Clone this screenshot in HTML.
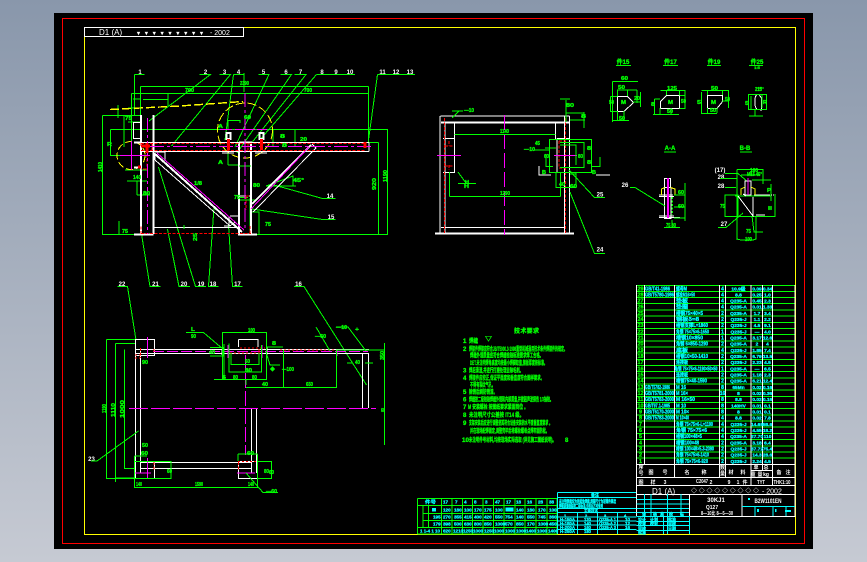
<!DOCTYPE html>
<html><head><meta charset="utf-8"><style>
html,body{margin:0;padding:0;width:867px;height:562px;overflow:hidden;background:linear-gradient(to bottom,#8997ab,#c6cad3)}
svg{position:absolute;left:0;top:0;display:block}
path,line,rect,polygon,polyline,circle,ellipse{shape-rendering:crispEdges;fill:none}
text{font-family:"Liberation Sans","Noto Sans CJK SC",sans-serif;font-weight:bold}
.w{stroke:#fff;stroke-width:1}.W{stroke:#fff;stroke-width:2}
.g{stroke:#0f0;stroke-width:1}
.r{stroke:#f00;stroke-width:1.3;stroke-dasharray:3 1.5}
.p{stroke:#f0f;stroke-width:1.2;stroke-dasharray:14 3 3 3}
.ps{stroke:#f0f;stroke-width:1}
.y{stroke:#ff0;stroke-width:1}.yd{stroke:#ff0;stroke-width:1.4;stroke-dasharray:9 3}
.c{stroke:#0ff;stroke-width:1}
.tw{fill:#fff;font-size:7px}
.tg{fill:#0f0;stroke:#0f0;stroke-width:.3;font-size:5px}
.tc{fill:#0ff;stroke:#0ff;stroke-width:.3;font-size:5px}
.tn{fill:#0f0;stroke:#0f0;stroke-width:.3;font-size:5.5px}
</style></head><body>
<svg width="867" height="562" viewBox="0 0 867 562" xmlns="http://www.w3.org/2000/svg">
<rect x="54" y="13" width="759" height="536" style="fill:#000"/>
<rect x="62.5" y="18.5" width="742" height="525" style="stroke:#f00;stroke-width:1"/>
<rect x="84.5" y="27.5" width="711" height="507" style="stroke:#ff0;stroke-width:1.3"/>
<rect x="84.5" y="27.5" width="159" height="9" class="w"/>
<text x="99" y="35" class="tw" style="font-size:8px;font-weight:normal">D1 (A)</text>
<text x="137" y="35" class="tw" textLength="66" lengthAdjust="spacing" style="font-size:6px">▾▾▾▾▾▾▾▾▾</text>
<text x="210" y="35" class="tw" style="font-size:7px;font-weight:normal">- 2002</text>

<!-- front view green dims -->
<path class="g" d="M140.5 86.5H368.5M131.5 93.5H368.5M140.5 86.5V115M368.5 86.5V142M131.5 93.5V150M102.5 115.5H141M102.5 115.5V234.5H141M110.5 129.5H387.5V234.5H251M110.5 129.5V155.5H141M378.5 142.5V234.5M368 142.5H378.5M143 99.5H168M168 94V106M133 99H140"/>
<path class="g" d="M118 105V118M128 108H140M128 122H140M125 170H147M127 181H147M137 195V181M150 195H137"/>
<path class="g" d="M228 120.5H240V123M228 120.5V130M228 165V145M228 165H240M244 73V92M295 130V146M273 130V146M256 200H240M250 198V234M259 234.5V212H252M296 186H266V186L293 176V186"/>
<!-- leaders -->
<path class="g" d="M134.5 74.5H144.5M134.5 74.5V115M199.5 74.5H210.5L149 121M219.5 74.5H230.5L171.5 146M233.5 74.5H244M233.5 74.5L225 140M258.5 74.5H269L235 147M280.5 74.5H291.5L237 153M294.5 74.5H306L250 145M316.5 74.5H355M316.5 74.5L261.5 138M377.5 74.5H415M377.5 74.5L368.5 140"/>
<path class="g" d="M274 185L322.5 198.5H335.5M252 209L322.5 219.5H335.5M141.5 234L150 286.5H160.5M167.5 229L179 286.5H190M158.5 167L195.5 286.5H206M214 207L208.5 286.5H218.5M228.5 225L232.5 286.5H242.5"/>
<path class="g" d="M117.5 286.5H127.5L136 340M294 286.5H304L366.5 385"/>
<path class="g" d="M124 147V116M119 234V221"/>
<path class="yd" d="M110 109.5L180 106L243 101.5"/>
<circle class="y" style="stroke-dasharray:9 3" cx="245" cy="130.5" r="27.5"/>
<ellipse class="y" style="stroke-dasharray:7 3" cx="131" cy="155.5" rx="14" ry="14"/>
<!-- front structure -->
<path class="W" d="M141 115V234M153.5 115V234M239 142V234M251 142V234"/>
<path class="W" d="M134 234.5H153.5M238 234.5H257"/>
<path class="w" d="M141 142.5H369M141 151.5H369M369 142.5V151.5M153 227.5H239"/>
<path class="W" d="M239 142.5H252"/>
<path class="W" d="M155 154L242 232M252 204L311 145"/>
<path class="w" d="M155 160L230 226L235 222M253 212L316 148L312 144M155 153V160"/>
<rect class="w" x="133.5" y="122.5" width="7" height="16"/>
<path class="W" d="M134 142.5H141M134 167.5H141"/>
<rect class="W" x="226.5" y="133" width="4" height="6"/>
<rect class="W" x="259.5" y="133" width="4" height="6"/>
<path class="w" d="M223 151.5H233M256 151.5H266M222 153H234M255 153H267M155 152H165V161"/>
<path class="w" d="M224 226H229V217M240 216H230M240 196H251"/>
<path class="g" d="M239 166H251M239 197.5H248M184 225V229"/>
<path class="r" d="M141 143.5H366M141 150.5H366M141 233.5H251M141 226.5V234M250 226V234"/>
<path class="r" d="M141 143V146M147 150V170M146 169H141M152 143V152M248 143V152M246 196V210M246 196H250"/>
<path class="p" d="M150 146.5H373"/>
<path class="p" d="M147.5 118V234M245 93V231"/>
<path class="ps" d="M120 155.5H150M131.5 141V170"/>
<path class="ps" d="M220 129.5H232M235 129.5H255M257 129.5H267" />
<path class="ps" d="M157 153L244 230M251 209L309 147"/>
<path stroke="#f00" stroke-width="3" d="M147 143V153M141 146H150M228.5 139V150M261.5 139V150M365 142V148M138 167H141"/>

<!-- labels -->
<g class="tw" style="font-size:6px" text-anchor="middle">
<text x="140" y="74">1</text><text x="205.5" y="74">2</text><text x="224.5" y="74">3</text><text x="238.5" y="74">4</text><text x="263.5" y="74">5</text><text x="286" y="74">6</text><text x="300.5" y="74">7</text><text x="322" y="74">8</text><text x="336" y="74">9</text><text x="350" y="74">10</text><text x="382.5" y="74">11</text><text x="396" y="74">12</text><text x="410" y="74">13</text>
<text x="330" y="198">14</text><text x="331" y="219">15</text>
<text x="122" y="286">22</text><text x="155.5" y="286">21</text><text x="184" y="286">20</text><text x="201" y="286">19</text><text x="213" y="286">18</text><text x="237.5" y="286">17</text><text x="298.5" y="286">16</text>
<text x="91.5" y="461">23</text><text x="600" y="196.5">25</text><text x="600" y="251.5">24</text><text x="625" y="187">26</text><text x="724" y="226">27</text><text x="721" y="179">28</text><text x="721" y="188">28</text><text x="720" y="172">(17)</text>
</g>
<!-- small dims front -->
<g class="tg">
<text x="185" y="92" textLength="9" lengthAdjust="spacingAndGlyphs">700</text><text x="240" y="85" textLength="9" lengthAdjust="spacingAndGlyphs">2390</text><text x="304" y="92" textLength="8" lengthAdjust="spacingAndGlyphs">700</text>
<text x="125" y="120" textLength="7" lengthAdjust="spacingAndGlyphs">75</text><text x="107" y="146" textLength="5" lengthAdjust="spacingAndGlyphs">R</text><text x="133" y="179" textLength="8" lengthAdjust="spacingAndGlyphs">140</text><text x="143" y="195" textLength="7" lengthAdjust="spacingAndGlyphs">80</text><text x="122" y="233" textLength="6" lengthAdjust="spacingAndGlyphs">75</text>
<text x="244" y="119" textLength="7" lengthAdjust="spacingAndGlyphs">60</text><text x="218" y="128" textLength="5" lengthAdjust="spacingAndGlyphs">A</text><text x="218" y="164" textLength="5" lengthAdjust="spacingAndGlyphs">A</text>
<text x="280" y="138" textLength="5" lengthAdjust="spacingAndGlyphs">8</text><text x="282" y="147" textLength="5" lengthAdjust="spacingAndGlyphs">8</text><text x="300" y="141" textLength="7" lengthAdjust="spacingAndGlyphs">20</text><text x="253" y="187" textLength="7" lengthAdjust="spacingAndGlyphs">80</text><text x="234" y="199" textLength="6" lengthAdjust="spacingAndGlyphs">75</text><text x="265" y="226" textLength="6" lengthAdjust="spacingAndGlyphs">75</text><text x="293" y="182" textLength="11" lengthAdjust="spacingAndGlyphs">45°</text><text x="194" y="185" textLength="8" lengthAdjust="spacingAndGlyphs">1/8</text>
<text transform="translate(102 172) rotate(-90)" textLength="10" lengthAdjust="spacingAndGlyphs">1410</text>
<text transform="translate(376 190) rotate(-90)" textLength="12" lengthAdjust="spacingAndGlyphs">920</text>
<text transform="translate(387 182) rotate(-90)" textLength="12" lengthAdjust="spacingAndGlyphs">1190</text>
<text transform="translate(197 241) rotate(-90)" textLength="8" lengthAdjust="spacingAndGlyphs">25</text>
</g>

<!-- side view -->
<path class="w" d="M440.5 116H569.5M440 116V233M445 122V233M564.5 116V233M569.5 116V233M441 227.5H565"/>
<path class="W" d="M441 122.5H570M435 233.5H574"/>
<path class="w" d="M454.5 123V139M555.5 123V139M443 138.5H454.5V172.5H443M557 138.5H570M557 138.5V172.5H570M443 172.5H454"/>
<path class="r" d="M444.5 118V233M565.5 118V233M449 141V146M449 165V170M559 141V168M445 146H453M445 166H453M559 141H565M559 168H565"/>
<path class="p" style="stroke-dasharray:15 4" d="M504.5 115V235"/>
<path class="ps" d="M437 155.5H461M554 155.5H577"/>
<path class="g" d="M454.5 134.5H555.5M449.5 196.5H560.5M449.5 172V196.5M560.5 172V196.5M549.5 139.5H591.5V172.5H549.5ZM560 142.5H584V167.5H560M560 145H576V165M546 154V166.5H553M592 166.5H600V157M569 170L594.5 197.5H605M570 192L594.5 253.5H605M556 172V187.5H576V172M576 174H570M466 183L458 172M458 183.5H476M566 100V122M560 99H570M566 113H584V128M584 112V128M570 120H585M545 148H556M534 150H549"/>
<path class="g" d="M459 111L452 118M452 111H463"/>
<path class="w" d="M539 166V175H551M596 175H610"/>
<g class="tg">
<text x="500" y="133" textLength="9" lengthAdjust="spacingAndGlyphs">1140</text><text x="500" y="195" textLength="10" lengthAdjust="spacingAndGlyphs">1290</text><text x="464" y="112" textLength="10" lengthAdjust="spacingAndGlyphs">—10</text><text x="566" y="107" textLength="8" lengthAdjust="spacingAndGlyphs">80</text>
<text x="524" y="151" textLength="11" lengthAdjust="spacingAndGlyphs">—10</text><text x="535" y="145" textLength="5" lengthAdjust="spacingAndGlyphs">45</text><text x="544" y="158" textLength="5" lengthAdjust="spacingAndGlyphs">60</text><text x="578" y="158" textLength="5" lengthAdjust="spacingAndGlyphs">80</text><text x="587" y="150" textLength="4" lengthAdjust="spacingAndGlyphs">8</text><text x="587" y="164" textLength="4" lengthAdjust="spacingAndGlyphs">8</text><text x="559" y="186" textLength="6" lengthAdjust="spacingAndGlyphs">40</text><text x="570" y="188" textLength="7" lengthAdjust="spacingAndGlyphs">60</text><text x="581" y="118" textLength="5" lengthAdjust="spacingAndGlyphs">8</text><text x="465" y="184" textLength="4" lengthAdjust="spacingAndGlyphs">H</text><text x="464" y="188" textLength="5" lengthAdjust="spacingAndGlyphs">H</text><text x="542" y="174" textLength="4" lengthAdjust="spacingAndGlyphs">B</text><text x="592" y="174" textLength="4" lengthAdjust="spacingAndGlyphs">B</text>
</g>

<!-- sections -->
<g class="tn" text-anchor="middle" style="font-size:6px"><text x="623" y="64">件15</text><text x="670.5" y="64">件17</text><text x="714" y="64">件19</text><text x="757" y="64">件25</text><text x="757" y="69" style="font-size:4px">1:5</text><text x="670" y="150">A-A</text><text x="745" y="150">B-B</text></g>
<path class="g" d="M616 65.5H631M663 65.5H678M707 65.5H721M749 65.5H763M664 152H676M740 152H752"/>
<polygon class="w" points="617.5,96.5 627.5,96.5 633.5,102.5 624,111.5 617.5,111.5"/>
<path class="g" d="M612.5 81.5H638M612.5 81.5V122M617 90H637M637 90V103M617.5 90V96M627.5 90V96M640.5 92V107M633 102H641M610.5 96.5H617.5M610.5 96.5V111.5H617.5M612 120.5H629M617.5 111V120M624 111V120"/>
<polygon class="w" points="666.5,95.5 679.5,95.5 679.5,108.5 660.5,108.5 660.5,101.5"/>
<path class="g" d="M660.5 90.5H685M666.5 90V95M679.5 90V95M679.5 95.5H685V108.5H679.5M654.5 99H660M654.5 99V114M653 114.5H679M660 108V114M671 108V114M685 90V108"/>
<polygon class="w" points="707.5,95.5 722.5,95.5 722.5,101.5 717,108.5 707.5,108.5"/>
<path class="g" d="M701.5 90.5H729M707.5 90V95M722.5 90V95M728.5 90V108M722 101H729M701.5 92V114M701 113.5H717M707.5 108V113M717 108V113"/>
<path class="w" d="M753.5 94.5H759L761.5 98V110L759 109.5H753.5M757 94.5C754 97 754 106 757 109.5"/>
<path class="g" d="M748.5 94.5H766.5V109.5H748.5ZM751 96V110M762 94.5V108M749 116H763M755 110V116M757 88H764"/>
<!-- section 26 -->
<rect class="w" x="664.5" y="178.5" width="6" height="9"/>
<path class="w" d="M664.5 187V218.5H671V187M665 217.5H671"/>
<path class="w" d="M659 195H673M659 196.5H674M659 216H674M659 217.5H680"/>
<path class="y" d="M661.5 195V189L665 187.5M670.5 187.5L675 189V195"/>
<path class="ps" style="stroke-width:2" d="M668 178V218"/>
<path class="g" d="M630 187.5H635L665 206M685 183V221M674 195H685M674 207H685M674 218H685M664 227.5H680M672 220V227"/>
<path class="g" style="stroke-dasharray:2 1.5;stroke-width:1.5" d="M672 197V215"/>
<!-- section 27 -->
<path class="g" d="M737 169.5H763V184M737 169.5V240M751 171V175M741 175H760M752 180H771M771 184V201M735 196H771M725 195H738V216.5H725ZM725 216.5H775V194M737 216V239L741 240H753L756 239V216M725 178.5H736M720 178.5H737M725 187.5H736M725 173.5H738L748 182M752 216L754 232H763M718 227.5H726L743 213"/>
<path class="w" d="M745 181H751V195H745ZM743 194L746 196M738 196L753 216V197M754 195H769M756 215H765"/>
<path class="y" d="M741 195V189L745 187M751 187L755 189V195"/>
<path class="ps" style="stroke-width:1.3" d="M748 178V195"/>
<path class="w" style="stroke-dasharray:1 1" d="M757 195H775"/>
<g class="tg"><text x="750" y="172" textLength="8" lengthAdjust="spacingAndGlyphs">160</text><text x="747" y="176" textLength="15" lengthAdjust="spacingAndGlyphs">M16 45°</text><text x="767" y="192" textLength="4" lengthAdjust="spacingAndGlyphs">P</text><text x="768" y="210" textLength="4" lengthAdjust="spacingAndGlyphs">80</text><text x="720" y="208" textLength="5" lengthAdjust="spacingAndGlyphs">75</text><text x="746" y="233" textLength="5" lengthAdjust="spacingAndGlyphs">75</text><text x="745" y="241" textLength="7" lengthAdjust="spacingAndGlyphs">100</text><text x="666" y="227" textLength="10" lengthAdjust="spacingAndGlyphs">75 80</text><text x="678" y="194" textLength="6" lengthAdjust="spacingAndGlyphs">60</text><text x="678" y="208" textLength="6" lengthAdjust="spacingAndGlyphs">60</text><text x="609" y="104" textLength="5" lengthAdjust="spacingAndGlyphs">50</text><text x="621" y="104" textLength="5" lengthAdjust="spacingAndGlyphs">M</text><text x="618" y="89" textLength="7" lengthAdjust="spacingAndGlyphs">50</text><text x="621" y="80" textLength="7" lengthAdjust="spacingAndGlyphs">60</text><text x="634" y="100" textLength="6" lengthAdjust="spacingAndGlyphs">20</text><text x="619" y="120" textLength="6" lengthAdjust="spacingAndGlyphs">50</text><text x="667" y="90" textLength="10" lengthAdjust="spacingAndGlyphs">125</text><text x="668" y="104" textLength="5" lengthAdjust="spacingAndGlyphs">M</text><text x="681" y="103" textLength="5" lengthAdjust="spacingAndGlyphs">50</text><text x="667" y="113" textLength="6" lengthAdjust="spacingAndGlyphs">50</text><text x="651" y="106" textLength="4" lengthAdjust="spacingAndGlyphs">8</text><text x="711" y="90" textLength="7" lengthAdjust="spacingAndGlyphs">50</text><text x="711" y="104" textLength="5" lengthAdjust="spacingAndGlyphs">M</text><text x="725" y="101" textLength="5" lengthAdjust="spacingAndGlyphs">50</text><text x="697" y="104" textLength="4" lengthAdjust="spacingAndGlyphs">5</text><text x="710" y="112" textLength="6" lengthAdjust="spacingAndGlyphs">50</text><text x="755" y="91" textLength="7" lengthAdjust="spacingAndGlyphs">215</text><text x="745" y="105" textLength="4" lengthAdjust="spacingAndGlyphs">5</text><text x="763" y="104" textLength="4" lengthAdjust="spacingAndGlyphs">R</text></g>

<!-- plan view -->
<path class="w" d="M135.5 344V473M140.5 350V473M135 349.5H369M135 353.5H369M362.5 353V408M368.5 353V408M251.5 408V473M256.5 408V473M141 462.5H252M141 468.5H252"/>
<rect class="w" x="135.5" y="339.5" width="19" height="16"/>
<rect class="w" x="135.5" y="461.5" width="19" height="17"/>
<rect class="w" x="238.5" y="461.5" width="19" height="17"/>
<path class="w" d="M238.5 339.5H258V347M238.5 339.5V347M222 349V355M267 347V355"/>
<path class="p" style="stroke-dasharray:19 3" d="M129 408.5H376"/>
<path class="p" style="stroke-dasharray:15 3" d="M245.5 355V455"/>
<path class="ps" style="stroke-dasharray:11 3" d="M153 351.5H368"/>
<path class="ps" d="M147.5 337V358M147.5 458V479M135 473H151M237 473H255M228 345V358M262 345V358M337 350V356"/>
<path class="r" style="stroke-dasharray:2 2" d="M280 350H366M135 461.5H153M238 461.5H257M240 348H265M230 353H260M135 355H141M135 358H140"/>
<path class="r" d="M140.5 348V358M154 349V353M154 462V470M238.5 462V470M259 349V353M229 349V354"/>
<path class="g" d="M106.5 339.5H135M106.5 339.5V478.5H135M115.5 343.5H135M115.5 343.5V482M115 478H135M124.5 349.5V468.5H135M222.5 332.5H266.5V379.5H222.5ZM229 343.5V372H261.5V345M231 353V364.5H259V353M214 379.5H266M224 344V378M246 387.5H336.5V350M283.5 350V387M210 347.5H223V356H210M266 347H283M246 385V380M336 350H384M384.5 343V445M137 365H137"/>
<path class="g" d="M186 332.5H203.5L223.5 349.5M97 461H91M97 461L138.5 431M134.5 456H147M134.5 456V487.5H257.5V454M134.5 461.5H171V478.5H134.5M238 454H257.5M257.5 461.5H271.5V478.5H257.5M238 461V454M246 473L263 492.5H278M316 327L330 351M336 327H348L366 351M280 365H270L266 352M365 363H373M347 363H353"/>
<g class="tg">
<text x="248" y="332" textLength="7" lengthAdjust="spacingAndGlyphs">100</text><text x="272" y="345" textLength="4" lengthAdjust="spacingAndGlyphs">8</text><text x="270" y="371" textLength="5" lengthAdjust="spacingAndGlyphs">◆</text><text x="282" y="371" textLength="12" lengthAdjust="spacingAndGlyphs">—100</text><text x="262" y="386" textLength="6" lengthAdjust="spacingAndGlyphs">40</text><text x="306" y="386" textLength="7" lengthAdjust="spacingAndGlyphs">650</text><text x="336" y="329" textLength="11" lengthAdjust="spacingAndGlyphs">—10</text><text x="315" y="338" textLength="11" lengthAdjust="spacingAndGlyphs">—60</text><text x="355" y="331" textLength="4" lengthAdjust="spacingAndGlyphs">+</text><text x="245" y="372" textLength="7" lengthAdjust="spacingAndGlyphs">80</text><text x="245" y="363" textLength="5" lengthAdjust="spacingAndGlyphs">60</text><text x="233" y="379" textLength="5" lengthAdjust="spacingAndGlyphs">80</text><text x="252" y="379" textLength="5" lengthAdjust="spacingAndGlyphs">80</text><text x="222" y="379" textLength="4" lengthAdjust="spacingAndGlyphs">6</text><text x="191" y="331" textLength="4" lengthAdjust="spacingAndGlyphs">L</text><text x="191" y="338" textLength="5" lengthAdjust="spacingAndGlyphs">90</text><text x="209" y="354" textLength="6" lengthAdjust="spacingAndGlyphs">40</text><text x="142" y="364" textLength="6" lengthAdjust="spacingAndGlyphs">90</text><text x="142" y="447" textLength="6" lengthAdjust="spacingAndGlyphs">50</text><text x="141" y="455" textLength="7" lengthAdjust="spacingAndGlyphs">60</text><text x="136" y="486" textLength="6" lengthAdjust="spacingAndGlyphs">140</text><text x="195" y="486" textLength="8" lengthAdjust="spacingAndGlyphs">1590</text><text x="248" y="486" textLength="6" lengthAdjust="spacingAndGlyphs">140</text><text x="247" y="455" textLength="7" lengthAdjust="spacingAndGlyphs">60</text><text x="264" y="473" textLength="5" lengthAdjust="spacingAndGlyphs">80</text><text x="269" y="474" textLength="5" lengthAdjust="spacingAndGlyphs">60</text><text x="266" y="493" textLength="11" lengthAdjust="spacingAndGlyphs">—60</text><text x="167" y="473" textLength="5" lengthAdjust="spacingAndGlyphs">60</text><text x="355" y="364" textLength="5" lengthAdjust="spacingAndGlyphs">40</text><text x="381" y="412" textLength="4" lengthAdjust="spacingAndGlyphs">60</text>
<text transform="translate(106 413) rotate(-90)" textLength="9" lengthAdjust="spacingAndGlyphs">1190</text>
<text transform="translate(115 417) rotate(-90)" textLength="14" lengthAdjust="spacingAndGlyphs">1110</text>
<text transform="translate(124 418) rotate(-90)" textLength="18" lengthAdjust="spacingAndGlyphs">1000</text>
<text transform="translate(384 360) rotate(-90)" textLength="9" lengthAdjust="spacingAndGlyphs">350</text>
</g>

<!-- notes -->
<g class="tn" style="font-size:6px">
<text x="514" y="333" textLength="25" lengthAdjust="spacing">技 术 要 求</text>
<text x="463" y="343">1</text><text x="469" y="343" textLength="9" lengthAdjust="spacingAndGlyphs">焊缝</text><text x="485" y="341" textLength="7" lengthAdjust="spacingAndGlyphs">▽</text>
<text x="463" y="351">2</text><text x="469" y="351" textLength="98" lengthAdjust="spacingAndGlyphs">焊接件焊接应符合JB/T5000.3-1998重型机械通用技术条件焊接件的规定。</text>
<text x="470" y="357.5" textLength="73" lengthAdjust="spacingAndGlyphs">焊缝外观质量应符合焊缝检验标准要求焊工合格。</text>
<text x="470" y="365" textLength="77" lengthAdjust="spacingAndGlyphs">DET.未注明焊角高度均按最小焊脚取值,钢板厚度按标准。</text>
<text x="463" y="372.5">3</text><text x="469" y="372.5" textLength="54" lengthAdjust="spacingAndGlyphs">焊后清渣,并进行打磨处理去除毛刺。</text>
<text x="463" y="380">4</text><text x="469" y="380" textLength="75" lengthAdjust="spacingAndGlyphs">焊接件应校正,保证平面度和垂直度符合图样要求。</text>
<text x="470" y="387" textLength="25" lengthAdjust="spacingAndGlyphs">不得有裂纹气孔。</text>
<text x="463" y="394">5</text><text x="469" y="394" textLength="28" lengthAdjust="spacingAndGlyphs">除锈后刷防锈漆。</text>
<text x="463" y="401.5">6</text><text x="469" y="401.5" textLength="84" lengthAdjust="spacingAndGlyphs">焊缝按二级检验焊缝外观和内部质量,并做超声波探伤 1/3抽检。</text>
<text x="463" y="409">7</text><text x="468" y="409" textLength="60" lengthAdjust="spacingAndGlyphs">M 安装螺栓 按图纸要求紧固到位 。</text>
<text x="463" y="417">8</text><text x="469" y="417" textLength="55" lengthAdjust="spacingAndGlyphs">未注明尺寸公差按 IT14 级。</text>
<text x="463" y="425">9</text><text x="469" y="425" textLength="83" lengthAdjust="spacingAndGlyphs">支架安装后应进行调整使其符合设备安装的水平度垂直度要求 。</text>
<text x="470" y="433" textLength="79" lengthAdjust="spacingAndGlyphs">并在现场配焊固定,调整完毕后将螺栓螺母点焊牢固防松。</text>
<text x="462" y="442" textLength="7" lengthAdjust="spacingAndGlyphs">10</text><text x="469" y="442" textLength="87" lengthAdjust="spacingAndGlyphs">未注明件号材料,均按现场实际选取 (详见施工图纸说明)。 </text><text x="565" y="442">8</text>
</g>

<!-- weight table -->
<path class="g" style="stroke-width:1.2" d="M417.5 498.5H557.5M417.5 505.5H557.5M423 513.5H557.5M423 520.5H557.5M417.5 527.5H557.5M417.5 534H557.5M417.5 498.5V534M423 505.5V527M428.5 505.5V527M441.5 498.5V534M452 498.5V534M462.5 498.5V534M472.5 498.5V534M483 498.5V534M493.5 498.5V534M504 498.5V534M515 498.5V534M525 498.5V534M536 498.5V534M547 498.5V534M557 498.5V534"/>
<g class="tc" style="font-size:4.6px">
<text x="425" y="503.5" textLength="11" lengthAdjust="spacingAndGlyphs">件号</text>
<text x="443" y="503.5">17</text><text x="455" y="503.5">7</text><text x="464" y="503.5">4</text><text x="474" y="503.5">8</text><text x="485" y="503.5">3</text><text x="495" y="503.5">47</text><text x="506" y="503.5">17</text><text x="516" y="503.5">18</text><text x="527" y="503.5">16</text><text x="538" y="503.5">28</text><text x="549" y="503.5">38</text>
<text x="443" y="511.5">120</text><text x="454" y="511.5">180</text><text x="464" y="511.5">100</text><text x="474" y="511.5">170</text><text x="484" y="511.5">175</text><text x="495" y="511.5">100</text><text x="516" y="511.5">140</text><text x="527" y="511.5">180</text><text x="538" y="511.5">170</text><text x="549" y="511.5">100</text>
<text x="433" y="518.5">195</text><text x="443" y="518.5">270</text><text x="454" y="518.5">355</text><text x="464" y="518.5">415</text><text x="474" y="518.5">400</text><text x="484" y="518.5">420</text><text x="495" y="518.5">550</text><text x="505" y="518.5">754</text><text x="516" y="518.5">140</text><text x="527" y="518.5">550</text><text x="538" y="518.5">745</text><text x="549" y="518.5">360</text>
<text x="433" y="525.5">179</text><text x="443" y="525.5">398</text><text x="454" y="525.5">500</text><text x="464" y="525.5">630</text><text x="474" y="525.5">800</text><text x="484" y="525.5">850</text><text x="495" y="525.5">1000</text><text x="505" y="525.5">570</text><text x="516" y="525.5">850</text><text x="527" y="525.5">170</text><text x="538" y="525.5">1000</text><text x="549" y="525.5">450</text>
<text x="420" y="532.5" textLength="20" lengthAdjust="spacingAndGlyphs">1 1-4 1 10</text><text x="443" y="532.5">620</text><text x="453" y="532.5">1210</text><text x="463" y="532.5">1250</text><text x="473" y="532.5">1000</text><text x="484" y="532.5">1250</text><text x="494" y="532.5">1000</text><text x="505" y="532.5">1000</text><text x="516" y="532.5">1000</text><text x="526" y="532.5">1400</text><text x="537" y="532.5">1000</text><text x="548" y="532.5">1400</text>
</g>
<rect x="432" y="508" width="4" height="3.5" style="fill:#0ff"/>
<rect x="505.5" y="507.5" width="8" height="4" style="fill:#0ff"/>
<!-- cyan block -->
<path class="c" d="M557.5 492.5H636.5M557.5 497.5H636.5M557.5 508.5H636.5M557.5 512.5H636.5M557.5 517H636.5M557.5 521H636.5M557.5 525H636.5M557.5 529.5H636.5M557.5 492.5V534M577.5 512.5V534M597.5 512.5V534M617.5 512.5V534"/>
<g class="tc" style="font-size:4.6px">
<text x="591" y="496.5" style="font-size:4px">备注</text>
<text x="559" y="503" textLength="57" lengthAdjust="spacingAndGlyphs">未注明焊缝均为连续角焊缝,焊脚尺寸为较薄件厚度</text>
<text x="559" y="507.5" textLength="44" lengthAdjust="spacingAndGlyphs">焊缝质量检验按二级标准,合格后方可使用</text>
<text x="584" y="512.5" textLength="14" lengthAdjust="spacingAndGlyphs">主要技术</text>
<text x="564" y="517" style="font-size:4px">1</text><text x="585" y="517" style="font-size:4px">2</text><text x="604" y="517" style="font-size:4px">3</text><text x="624" y="517" style="font-size:4px">4</text>
<text x="560" y="521" textLength="15" lengthAdjust="spacingAndGlyphs">H-150A</text><text x="584" y="521" textLength="7" lengthAdjust="spacingAndGlyphs">120</text><text x="599" y="521" textLength="17" lengthAdjust="spacingAndGlyphs">Q235-A 1</text><text x="625" y="521">10</text>
<text x="560" y="525" textLength="15" lengthAdjust="spacingAndGlyphs">H-180A</text><text x="584" y="525" textLength="7" lengthAdjust="spacingAndGlyphs">140</text><text x="599" y="525" textLength="17" lengthAdjust="spacingAndGlyphs">Q235-A 2</text><text x="625" y="525">12</text>
<text x="560" y="529" textLength="15" lengthAdjust="spacingAndGlyphs">H-200A</text><text x="584" y="529" textLength="7" lengthAdjust="spacingAndGlyphs">160</text><text x="599" y="529" textLength="17" lengthAdjust="spacingAndGlyphs">Q235-A 3</text><text x="625" y="529">16</text>
<text x="560" y="533" textLength="15" lengthAdjust="spacingAndGlyphs">H-250A</text><text x="584" y="533" textLength="7" lengthAdjust="spacingAndGlyphs">180</text>
</g>

<!-- parts table -->
<path class="g" style="stroke-width:1.2" d="M636.5 285.5H795.5M636.5 291.5H795.5M636.5 297.5H795.5M636.5 303.5H795.5M636.5 310H795.5M636.5 316H795.5M636.5 322.5H795.5M636.5 328.5H795.5M636.5 334.5H795.5M636.5 341H795.5M636.5 347H795.5M636.5 353H795.5M636.5 359.5H795.5M636.5 365.5H795.5M636.5 371.5H795.5M636.5 378H795.5M636.5 384H795.5M636.5 390H795.5M636.5 396.5H795.5M636.5 402.5H795.5M636.5 408.5H795.5M636.5 415H795.5M636.5 421H795.5M636.5 427H795.5M636.5 433.5H795.5M636.5 439.5H795.5M636.5 446H795.5M636.5 452H795.5M636.5 458H795.5"/>
<path class="w" d="M644.5 285V464M674.5 285V477M719.5 285V477M725.5 285V477M751 285V485M762.5 285V470M772.5 285V485"/>
<path class="w" d="M636.5 285V516M636.5 464.5H795.5M636.5 477.5H795.5M636.5 485.5H795.5M636.5 494.5H795.5M689.5 494.5V516.5M742 494.5V516.5M689.5 516.5H795.5M751 470.5H772.5"/>
<path class="w" d="M795 285V516"/>
<path class="c" d="M742 506.5H795M755 506.5V516M773 506.5V516M786 506.5V516M636.5 499.5H689M636.5 504H689M636.5 508.5H689M636.5 512.5H689M636.5 516.5H689M636.5 521.5H689M636.5 525.5H689M636.5 530.5H689M644.5 494V534M651 494V516M667.5 494V534M681 494V516M663.5 516V534M689.5 516V534"/>
<g class="tn" style="font-size:5.4px" text-anchor="middle">
<text x="640.5" y="290.5">29</text><text x="640.5" y="296.5">28</text><text x="640.5" y="302.5">27</text><text x="640.5" y="308.7">26</text><text x="640.5" y="314.9">25</text><text x="640.5" y="321">24</text><text x="640.5" y="327.2">23</text><text x="640.5" y="333.4">22</text><text x="640.5" y="339.5">21</text><text x="640.5" y="345.7">20</text><text x="640.5" y="351.9">19</text><text x="640.5" y="358">18</text><text x="640.5" y="364.2">17</text><text x="640.5" y="370.4">16</text><text x="640.5" y="376.5">15</text><text x="640.5" y="382.7">14</text><text x="640.5" y="388.9">13</text><text x="640.5" y="395">12</text><text x="640.5" y="401.2">11</text><text x="640.5" y="407.4">10</text><text x="640.5" y="413.6">9</text><text x="640.5" y="419.7">8</text><text x="640.5" y="425.9">7</text><text x="640.5" y="432.1">6</text><text x="640.5" y="438.2">5</text><text x="640.5" y="444.4">4</text><text x="640.5" y="450.6">3</text><text x="640.5" y="456.7">2</text><text x="640.5" y="462.9">1</text>
</g>
<g class="tc">
<text x="645" y="290.5" textLength="25" lengthAdjust="spacingAndGlyphs">GB/T41-1986</text>
<text x="645" y="296.5" textLength="29" lengthAdjust="spacingAndGlyphs">GB/T5780-1986</text>
<text x="645" y="388.9" textLength="25" lengthAdjust="spacingAndGlyphs">GB/T5782-1986</text>
<text x="645" y="395" textLength="29" lengthAdjust="spacingAndGlyphs">GB/T5781-2000</text>
<text x="645" y="401.2" textLength="29" lengthAdjust="spacingAndGlyphs">GB/T5783-2000</text>
<text x="645" y="407.4" textLength="25" lengthAdjust="spacingAndGlyphs">GB/T97.1-1985</text>
<text x="645" y="413.6" textLength="29" lengthAdjust="spacingAndGlyphs">GB/T6170-2000</text>
<text x="645" y="419.7" textLength="29" lengthAdjust="spacingAndGlyphs">GB/T5783-2000</text>
<text x="676" y="290.5" textLength="11" lengthAdjust="spacingAndGlyphs">螺母M</text>
<text x="676" y="296.5" textLength="19" lengthAdjust="spacingAndGlyphs">螺栓M16×50</text>
<text x="676" y="302.5" textLength="12" lengthAdjust="spacingAndGlyphs">垫板</text>
<text x="676" y="308.7" textLength="12" lengthAdjust="spacingAndGlyphs">垫圈</text>
<text x="676" y="314.9" textLength="27" lengthAdjust="spacingAndGlyphs">槽钢75×40×5</text>
<text x="676" y="321" textLength="23" lengthAdjust="spacingAndGlyphs">钢板δ=8</text>
<text x="676" y="327.2" textLength="32" lengthAdjust="spacingAndGlyphs">槽钢支撑L=1860</text>
<text x="676" y="333.4" textLength="33" lengthAdjust="spacingAndGlyphs">角钢 75×75×6-1650</text>
<text x="676" y="339.5" textLength="27" lengthAdjust="spacingAndGlyphs">槽钢10×850</text>
<text x="676" y="345.7" textLength="32" lengthAdjust="spacingAndGlyphs">角钢 6×850-1290</text>
<text x="676" y="351.9" textLength="12" lengthAdjust="spacingAndGlyphs">底板</text>
<text x="676" y="358" textLength="32" lengthAdjust="spacingAndGlyphs">槽钢10×50-1410</text>
<text x="676" y="364.2" textLength="12" lengthAdjust="spacingAndGlyphs">连接板</text>
<text x="674.5" y="370.4" textLength="43" lengthAdjust="spacingAndGlyphs">角钢 75×75×6-1190×50×50</text>
<text x="676" y="376.5" textLength="12" lengthAdjust="spacingAndGlyphs">连接板</text>
<text x="676" y="382.7" textLength="31" lengthAdjust="spacingAndGlyphs">槽钢75×40-1590</text>
<text x="676" y="388.9" textLength="10" lengthAdjust="spacingAndGlyphs">M 16</text>
<text x="676" y="395" textLength="12" lengthAdjust="spacingAndGlyphs">M 16×</text>
<text x="676" y="401.2" textLength="19" lengthAdjust="spacingAndGlyphs">M 16×50</text>
<text x="676" y="407.4" textLength="10" lengthAdjust="spacingAndGlyphs">M 10</text>
<text x="676" y="413.6" textLength="13" lengthAdjust="spacingAndGlyphs">M 10×</text>
<text x="676" y="419.7" textLength="13" lengthAdjust="spacingAndGlyphs">M 10×40</text>
<text x="676" y="425.9" textLength="37" lengthAdjust="spacingAndGlyphs">角钢 75×75×6-L=1190</text>
<text x="676" y="432.1" textLength="31" lengthAdjust="spacingAndGlyphs">角钢 75×75×6</text>
<text x="676" y="438.2" textLength="26" lengthAdjust="spacingAndGlyphs">槽钢100×48×5</text>
<text x="676" y="444.4" textLength="23" lengthAdjust="spacingAndGlyphs">槽钢100×48</text>
<text x="676" y="450.6" textLength="38" lengthAdjust="spacingAndGlyphs">槽钢 100×48×5.3-2390</text>
<text x="676" y="456.7" textLength="33" lengthAdjust="spacingAndGlyphs">角钢 75×75×6-1410</text>
<text x="676" y="462.9" textLength="32" lengthAdjust="spacingAndGlyphs">角钢 75×75×6-920</text>
</g>
<g class="tc" text-anchor="middle">
<text x="722.5" y="290.5">4</text><text x="722.5" y="296.5">4</text><text x="722.5" y="302.5">4</text><text x="722.5" y="308.7">4</text><text x="722.5" y="314.9">2</text><text x="722.5" y="321">2</text><text x="722.5" y="327.2">2</text><text x="722.5" y="333.4">1</text><text x="722.5" y="339.5">1</text><text x="722.5" y="345.7">2</text><text x="722.5" y="351.9">4</text><text x="722.5" y="358">2</text><text x="722.5" y="364.2">2</text><text x="722.5" y="370.4">1</text><text x="722.5" y="376.5">2</text><text x="722.5" y="382.7">2</text><text x="722.5" y="388.9">8</text><text x="722.5" y="395">16</text><text x="722.5" y="401.2">8</text><text x="722.5" y="407.4">8</text><text x="722.5" y="413.6">8</text><text x="722.5" y="419.7">4</text><text x="722.5" y="425.9">4</text><text x="722.5" y="432.1">4</text><text x="722.5" y="438.2">4</text><text x="722.5" y="444.4">2</text><text x="722.5" y="450.6">2</text><text x="722.5" y="456.7">2</text><text x="722.5" y="462.9">2</text>
</g>
<g class="tc" text-anchor="middle" style="font-size:4.8px">
<text x="738.5" y="290.5">10.9级</text><text x="738.5" y="296.5">8.8</text><text x="738.5" y="302.5">Q235-A</text><text x="738.5" y="308.7">Q235-A</text><text x="738.5" y="314.9">Q235-A</text><text x="738.5" y="321">Q235-J</text><text x="738.5" y="327.2">Q235-J</text><text x="738.5" y="333.4">Q235-J</text><text x="738.5" y="339.5">Q235-A</text><text x="738.5" y="345.7">Q235-A</text><text x="738.5" y="351.9">Q235-J</text><text x="738.5" y="358">Q235-A</text><text x="738.5" y="364.2">Q235-J</text><text x="738.5" y="370.4">Q235-A</text><text x="738.5" y="376.5">Q235-A</text><text x="738.5" y="382.7">Q235-A</text><text x="738.5" y="388.9">65Mn</text><text x="738.5" y="395">8</text><text x="738.5" y="401.2">8.8</text><text x="738.5" y="407.4">140HV</text><text x="738.5" y="413.6">8</text><text x="738.5" y="419.7">8.8</text><text x="738.5" y="425.9">Q235-J</text><text x="738.5" y="432.1">Q235-J</text><text x="738.5" y="438.2">Q235-A</text><text x="738.5" y="444.4">Q235-A</text><text x="738.5" y="450.6">Q235-J</text><text x="738.5" y="456.7">Q235-J</text><text x="738.5" y="462.9">Q235-J</text>
<text x="757" y="290.5">0.09</text><text x="757" y="296.5">0.25</text><text x="757" y="302.5">0.45</text><text x="757" y="308.7">0.01</text><text x="757" y="314.9">1.7</text><text x="757" y="321">1.1</text><text x="757" y="327.2">4.5</text><text x="757" y="333.4">—</text><text x="757" y="339.5">3.17</text><text x="757" y="345.7">2</text><text x="757" y="351.9">1.85</text><text x="757" y="358">6.79</text><text x="757" y="364.2">2.23</text><text x="757" y="370.4">—</text><text x="757" y="376.5">1.18</text><text x="757" y="382.7">6.21</text><text x="757" y="388.9">0.02</text><text x="757" y="395">0.02</text><text x="757" y="401.2">0.02</text><text x="757" y="407.4">0.01</text><text x="757" y="413.6">0.01</text><text x="757" y="419.7">0.02</text><text x="757" y="425.9">14.65</text><text x="757" y="432.1">4.55</text><text x="757" y="438.2">27.70</text><text x="757" y="444.4">3.18</text><text x="757" y="450.6">37.72</text><text x="757" y="456.7">14.3</text><text x="757" y="462.9">2.24</text>
<text x="767.5" y="290.5">0.34</text><text x="767.5" y="296.5">1.0</text><text x="767.5" y="302.5">2.3</text><text x="767.5" y="308.7">1.33</text><text x="767.5" y="314.9">3.4</text><text x="767.5" y="321">2.2</text><text x="767.5" y="327.2">9.1</text><text x="767.5" y="333.4">4.0</text><text x="767.5" y="339.5">12.6</text><text x="767.5" y="345.7">4</text><text x="767.5" y="351.9">7.4</text><text x="767.5" y="358">13.5</text><text x="767.5" y="364.2">4.5</text><text x="767.5" y="370.4">6.5</text><text x="767.5" y="376.5">2.3</text><text x="767.5" y="382.7">12.4</text><text x="767.5" y="388.9">0.16</text><text x="767.5" y="395">0.36</text><text x="767.5" y="401.2">0.16</text><text x="767.5" y="407.4">0.1</text><text x="767.5" y="413.6">0.1</text><text x="767.5" y="419.7">7.8</text><text x="767.5" y="425.9">58.6</text><text x="767.5" y="432.1">18.2</text><text x="767.5" y="438.2">110</text><text x="767.5" y="444.4">6.4</text><text x="767.5" y="450.6">75.4</text><text x="767.5" y="456.7">28.6</text><text x="767.5" y="462.9">4.5</text>
</g>
<!-- table header -->
<g class="tw" style="font-size:5px" text-anchor="middle">
<text x="641" y="469">序</text><text x="641" y="475">号</text><text x="651" y="474">图</text><text x="665" y="474">号</text><text x="687" y="474">名</text><text x="704" y="474">称</text><text x="722.5" y="469">数</text><text x="722.5" y="475">量</text><text x="731" y="474">材</text><text x="743" y="474">料</text><text x="756" y="469">单</text><text x="766" y="469">总</text><text x="753" y="476">重</text><text x="760" y="476">量</text><text x="766" y="476">kg</text><text x="779" y="474">备</text><text x="788" y="474">注</text>
<text x="641" y="484">图</text><text x="653" y="484">样</text><text x="665" y="484">3</text>
<text x="702" y="483" textLength="12" lengthAdjust="spacingAndGlyphs">C2047</text><text x="711" y="484">2</text><text x="729" y="484">9</text><text x="745" y="484">件</text><text x="738" y="484">1</text><text x="761" y="484" textLength="8" lengthAdjust="spacingAndGlyphs">TYT</text><text x="782" y="484" textLength="17" lengthAdjust="spacingAndGlyphs">THK1:10</text>
</g>
<text x="652" y="494" class="tw" style="font-size:8px;font-weight:normal">D1 (A)</text>
<text x="691" y="493" class="tw" style="font-size:6px" textLength="68" lengthAdjust="spacing">◇◇◇◇◇◇◇◇◇</text>
<text x="762" y="493.5" class="tw" style="font-size:7px;font-weight:normal">- 2002</text>
<g class="tw" text-anchor="middle" style="font-size:6px">
<text x="716" y="502">30KJ1</text><text x="712" y="509" style="font-size:5px">Q127</text>
<text x="717" y="515" style="font-size:5px" textLength="32" lengthAdjust="spacingAndGlyphs">8—10比 8—5—30</text>
<text x="768" y="503" textLength="27" lengthAdjust="spacingAndGlyphs">B2W1101EN</text>
</g>
<rect x="748" y="498" width="2" height="2" style="fill:#0ff"/><rect x="785" y="510" width="6" height="2" style="fill:#0ff"/><rect x="757" y="509" width="2" height="3" style="fill:#0ff"/><rect x="775" y="509" width="1.5" height="3" style="fill:#0ff"/>
<g class="tc" style="font-size:4px">
<text x="642" y="515.5">设</text><text x="653" y="515.5">核</text><text x="660" y="515.5">准</text><text x="669" y="515.5">校</text><text x="680" y="515.5">标</text>
<text x="638" y="521">设计</text><text x="638" y="525">校对</text><text x="638" y="530">审核</text><text x="638" y="534">批准</text>
<text x="650" y="521">计划</text><text x="650" y="525">校对</text><text x="668" y="521">批准</text><text x="668" y="525">审核</text><text x="668" y="530">日期</text>
</g>
</svg>
</body></html>
